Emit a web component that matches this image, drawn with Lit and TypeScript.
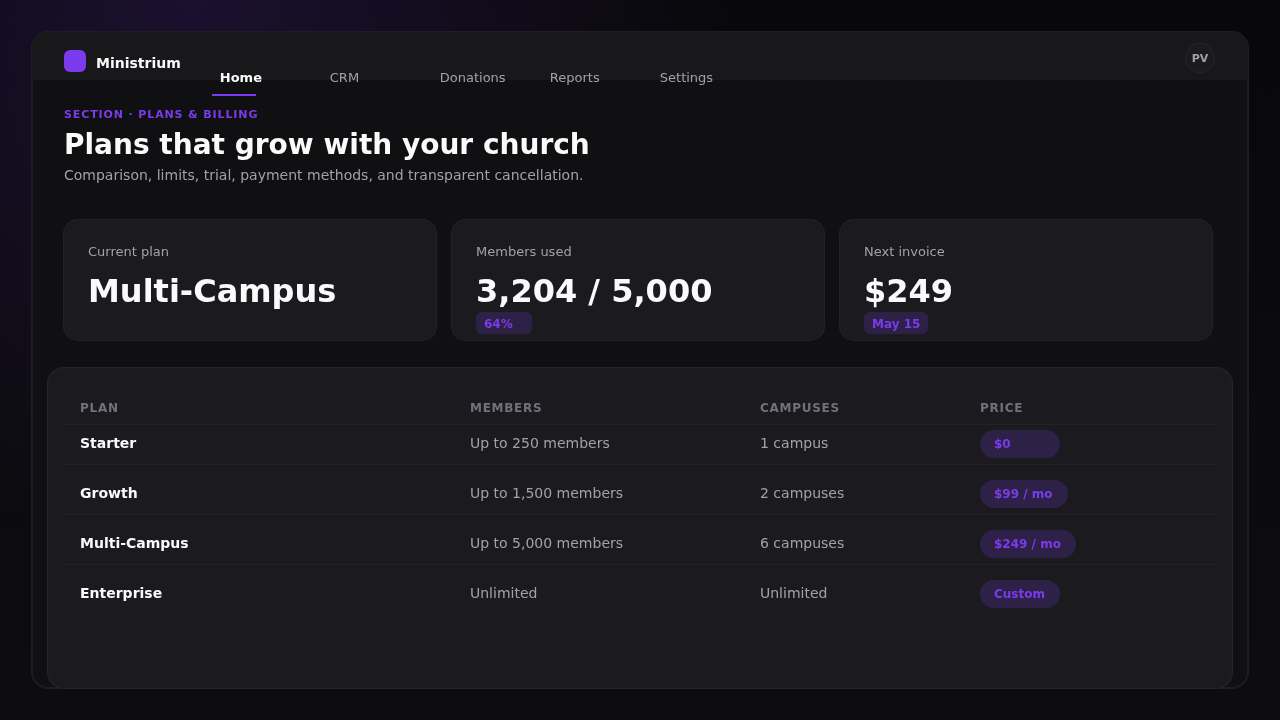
import { LitElement, html, css } from 'lit';
import { customElement } from 'lit/decorators.js';

const navItems = ['Home', 'CRM', 'Donations', 'Reports', 'Settings'];

const stats = [
  { label: 'Current plan', value: 'Multi-Campus', badge: '' },
  { label: 'Members used', value: '3,204 / 5,000', badge: '64%' },
  { label: 'Next invoice', value: '$249', badge: 'May 15' }
];

const plans = [
  { name: 'Starter', members: 'Up to 250 members', campuses: '1 campus', price: '$0' },
  { name: 'Growth', members: 'Up to 1,500 members', campuses: '2 campuses', price: '$99 / mo' },
  { name: 'Multi-Campus', members: 'Up to 5,000 members', campuses: '6 campuses', price: '$249 / mo' },
  { name: 'Enterprise', members: 'Unlimited', campuses: 'Unlimited', price: 'Custom' }
];

@customElement('app-root')
export class AppRoot extends LitElement {
  static styles = css`
    :host {
      display: block;
      width: 1280px;
      height: 720px;
      overflow: hidden;
      box-sizing: border-box;
      padding: 32px;
      font-family: "DejaVu Sans", sans-serif;
      color: #fafafa;
      background:
        radial-gradient(circle at 15% 0%, rgba(124, 58, 237, 0.16), transparent 42%),
        linear-gradient(180deg, #08080a, #0d0d11);
    }

    .window {
      box-sizing: border-box;
      height: 656px;
      display: flex;
      flex-direction: column;
      background: #101012;
      border-radius: 16px;
      box-shadow: 0 0 0 1px #1e1e22, inset 0 0 0 1px #1e1e22;
      will-change: transform;
    }

    .topbar {
      flex: none;
      height: 48px;
      padding: 0 32px;
      display: flex;
      align-items: flex-start;
      background: #18181b;
      border-radius: 16px 16px 0 0;
    }

    .brand {
      display: flex;
      align-items: center;
      gap: 10px;
      margin-top: 18px;
      font-size: 14px;
      font-weight: 700;
    }

    .brand span {
      margin-top: 4px;
    }

    .logo {
      width: 22px;
      height: 22px;
      border-radius: 6px;
      background: #7c3aed;
    }

    .nav {
      display: flex;
      margin-left: 31px;
      margin-top: 30px;
    }

    .nav-item {
      width: 110px;
      padding-top: 8px;
      font-size: 13px;
      line-height: 16px;
      color: #a1a1aa;
    }

    .nav-item span {
      display: block;
      padding-left: 8px;
    }

    .nav-item.active {
      color: #fafafa;
      font-weight: 700;
    }

    .underline {
      width: 44px;
      height: 2px;
      margin-top: 8px;
      background: #7c3aed;
    }

    .avatar {
      width: 28px;
      height: 28px;
      margin: 12px 2px 0 auto;
      display: flex;
      align-items: center;
      justify-content: center;
      border-radius: 50%;
      box-shadow: 0 0 0 1px #26262b;
      background: #1b1b1f;
      color: #a1a1aa;
      font-size: 11px;
      font-weight: 700;
    }

    .head {
      padding: 28px 32px 0;
    }

    .eyebrow {
      font-size: 11px;
      line-height: 14px;
      font-weight: 700;
      letter-spacing: 0.88px;
      color: #7c3aed;
    }

    h1 {
      margin: 5px 0 0;
      font-size: 28px;
      line-height: 36px;
      font-weight: 700;
    }

    .sub {
      margin: 2px 0 0;
      font-size: 14px;
      line-height: 20px;
      color: #a1a1aa;
    }

    .cards {
      display: grid;
      grid-template-columns: repeat(3, 372px);
      gap: 16px;
      margin: 35px 0 0 32px;
    }

    .card {
      box-sizing: border-box;
      height: 120px;
      padding: 24px 24px 0;
      background: #1b1b1f;
      border-radius: 14px;
      box-shadow: 0 0 0 1px #232327;
    }

    .label {
      font-size: 13px;
      line-height: 15px;
      color: #a1a1aa;
    }

    .value {
      margin-top: 11px;
      font-size: 32px;
      line-height: 42px;
      font-weight: 700;
    }

    .tag {
      display: inline-block;
      box-sizing: border-box;
      min-width: 56px;
      height: 22px;
      padding: 0 8px;
      border-radius: 6px;
      background: #2e2148;
      color: #7c3aed;
      font-size: 12px;
      line-height: 24px;
      font-weight: 700;
      vertical-align: top;
    }

    .panel {
      flex: 1;
      box-sizing: border-box;
      margin: 28px 16px 0;
      padding: 24px 16px 0;
      background: #1b1b1f;
      border-radius: 16px;
      box-shadow: 0 0 0 1px #26262a;
    }

    .row {
      display: grid;
      grid-template-columns: 390px 290px 220px 1fr;
      box-sizing: border-box;
      height: 50px;
      padding: 15px 16px 0;
      align-items: start;
      font-size: 14px;
      line-height: 26px;
      color: #a1a1aa;
      border-bottom: 1px solid #222226;
    }

    .row.titles {
      height: 33px;
      padding: 0 16px;
      align-items: center;
      font-size: 12px;
      line-height: 16px;
      font-weight: 700;
      letter-spacing: 0.72px;
      color: #71717a;
    }

    .row.first {
      height: 40px;
      padding-top: 5px;
    }

    .row.last {
      border-bottom: none;
    }

    .name {
      color: #fafafa;
      font-weight: 700;
    }

    .pill {
      display: inline-block;
      box-sizing: border-box;
      min-width: 80px;
      height: 28px;
      padding: 0 15px 0 14px;
      border-radius: 14px;
      background: #2e2148;
      color: #7c3aed;
      font-size: 12px;
      line-height: 28px;
      font-weight: 700;
      vertical-align: top;
    }
  `;

  render() {
    return html`
      <div class="window">
        <header class="topbar">
          <div class="brand"><div class="logo"></div><span>Ministrium</span></div>
          <nav class="nav">
            ${navItems.map((item, i) => html`
              <div class="nav-item ${i === 0 ? 'active' : ''}">
                <span>${item}</span>
                ${i === 0 ? html`<div class="underline"></div>` : ''}
              </div>
            `)}
          </nav>
          <div class="avatar">PV</div>
        </header>

        <div class="head">
          <div class="eyebrow">SECTION · PLANS &amp; BILLING</div>
          <h1>Plans that grow with your church</h1>
          <p class="sub">Comparison, limits, trial, payment methods, and transparent cancellation.</p>
        </div>

        <div class="cards">
          ${stats.map(s => html`
            <div class="card">
              <div class="label">${s.label}</div>
              <div class="value">${s.value}</div>
              ${s.badge ? html`<span class="tag">${s.badge}</span>` : ''}
            </div>
          `)}
        </div>

        <section class="panel">
          <div class="row titles">
            <div>PLAN</div><div>MEMBERS</div><div>CAMPUSES</div><div>PRICE</div>
          </div>
          ${plans.map((p, i) => html`
            <div class="row ${i === 0 ? 'first' : ''} ${i === plans.length - 1 ? 'last' : ''}">
              <div class="name">${p.name}</div>
              <div>${p.members}</div>
              <div>${p.campuses}</div>
              <div><span class="pill">${p.price}</span></div>
            </div>
          `)}
        </section>
      </div>
    `;
  }
}
